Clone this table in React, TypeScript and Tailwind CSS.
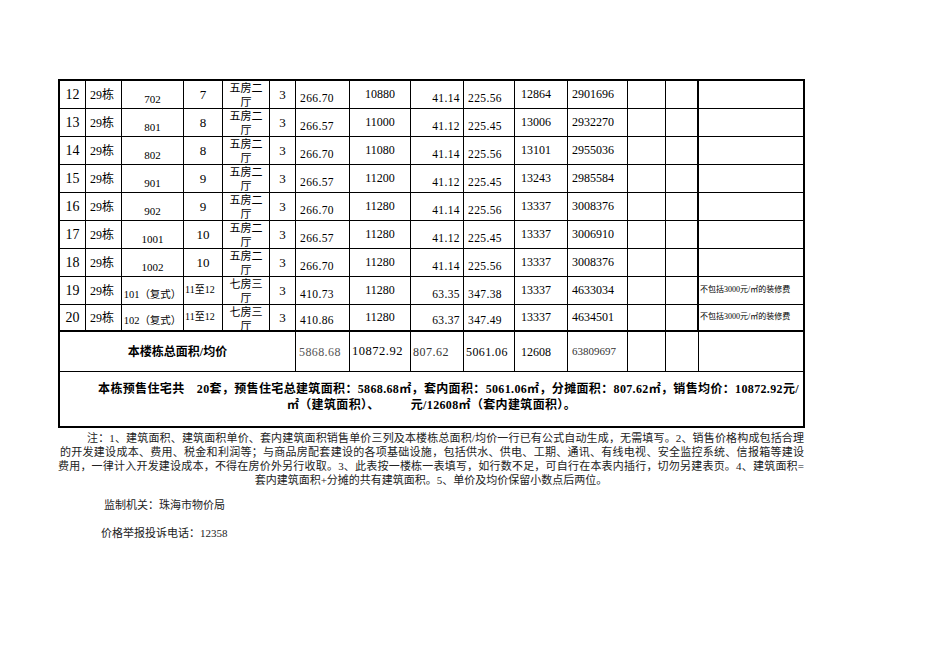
import React from "react";

type Row = {
  n: string;
  room: string;
  floor: string;
  type: string;
  area: string;
  price: string;
  share: string;
  inner: string;
  innerPrice: string;
  total: string;
  note?: string;
  dup?: boolean;
};

const rows: Row[] = [
  { n: "12", room: "702", floor: "7", type: "五房二厅", area: "266.70", price: "10880", share: "41.14", inner: "225.56", innerPrice: "12864", total: "2901696" },
  { n: "13", room: "801", floor: "8", type: "五房二厅", area: "266.57", price: "11000", share: "41.12", inner: "225.45", innerPrice: "13006", total: "2932270" },
  { n: "14", room: "802", floor: "8", type: "五房二厅", area: "266.70", price: "11080", share: "41.14", inner: "225.56", innerPrice: "13101", total: "2955036" },
  { n: "15", room: "901", floor: "9", type: "五房二厅", area: "266.57", price: "11200", share: "41.12", inner: "225.45", innerPrice: "13243", total: "2985584" },
  { n: "16", room: "902", floor: "9", type: "五房二厅", area: "266.70", price: "11280", share: "41.14", inner: "225.56", innerPrice: "13337", total: "3008376" },
  { n: "17", room: "1001", floor: "10", type: "五房二厅", area: "266.57", price: "11280", share: "41.12", inner: "225.45", innerPrice: "13337", total: "3006910" },
  { n: "18", room: "1002", floor: "10", type: "五房二厅", area: "266.70", price: "11280", share: "41.14", inner: "225.56", innerPrice: "13337", total: "3008376" },
  { n: "19", room: "101（复式）", floor: "11至12", type: "七房三厅", area: "410.73", price: "11280", share: "63.35", inner: "347.38", innerPrice: "13337", total: "4633034", note: "不包括3000元/㎡的装修费", dup: true },
  { n: "20", room: "102（复式）", floor: "11至12", type: "七房三厅", area: "410.86", price: "11280", share: "63.37", inner: "347.49", innerPrice: "13337", total: "4634501", note: "不包括3000元/㎡的装修费", dup: true },
];

function DataRow({ r, last }: { r: Row; last: boolean }) {
  const b = last ? "border-b-2" : "border-b";
  const base = `border-r border-black overflow-hidden ${b}`;
  return (
    <>
      <div className={`${base} flex items-center justify-center text-[14px]`}>{r.n}</div>
      <div className={`${base} flex items-center pl-[4px] text-[12px]`}>29栋</div>
      <div className={`${base} flex items-end justify-center pb-[1px] whitespace-nowrap ${r.dup ? "text-[10.5px]" : "text-[11px]"}`}>{r.room}</div>
      {r.dup ? (
        <div className={`${base} flex items-center pl-[1px] pb-[3px] text-[10px] whitespace-nowrap`}>{r.floor}</div>
      ) : (
        <div className={`${base} flex items-center justify-center text-[13px]`}>{r.floor}</div>
      )}
      <div className={`${base} text-center text-[11px] leading-[14px] px-[2px]`}>{r.type}</div>
      <div className={`${base} flex items-center justify-center text-[13px]`}>3</div>
      <div className={`${base} flex items-end pl-[4px] pb-[1px] text-[11.5px] tracking-[0.4px]`}>{r.area}</div>
      <div className={`${base} flex items-center justify-center pb-[2px] text-[12px]`}>{r.price}</div>
      <div className={`${base} flex items-end justify-end pr-[3px] pb-[1px] text-[11.5px] tracking-[0.4px]`}>{r.share}</div>
      <div className={`${base} flex items-end pl-[4px] pb-[1px] text-[11.5px] tracking-[0.4px]`}>{r.inner}</div>
      <div className={`${base} flex items-center pl-[6px] pb-[2px] text-[12px]`}>{r.innerPrice}</div>
      <div className={`${base} flex items-center pl-[4px] pb-[2px] text-[12px]`}>{r.total}</div>
      <div className={base}></div>
      <div className={`border-r-2 border-black ${b}`}></div>
      <div className={`border-r-2 border-black overflow-hidden ${b} flex items-center pl-[1px] pb-[2px] text-[8px] whitespace-nowrap`}>
        {r.note ?? ""}
      </div>
    </>
  );
}

export default function App() {
  return (
    <div className="w-[936px] h-[662px] bg-white overflow-hidden pt-[79px] pl-[58px] text-black font-['Liberation_Serif','Noto_Sans_CJK_SC',serif]">
      <div className="grid w-[747px] border-l-2 border-t-2 border-black grid-cols-[26px_36px_62px_39px_47px_26px_54px_61px_53px_51px_53px_60px_38px_33px_106px] grid-rows-[28px_28px_28px_28px_28px_28px_28px_28px_27px_40px_56px]">
        {rows.map((r, i) => (
          <DataRow key={r.n} r={r} last={i === rows.length - 1} />
        ))}

        {/* summary row */}
        <div className="col-span-6 border-r border-b border-black flex items-center justify-center font-bold text-[12px]">
          本楼栋总面积/均价
        </div>
        <div className="border-r border-b border-black flex items-center pl-[3px] text-[12px] text-[#555] tracking-[0.4px]">5868.68</div>
        <div className="border-r border-b border-black flex items-center pl-[2px] text-[12.5px] tracking-[0.5px]">10872.92</div>
        <div className="border-r border-b border-black flex items-center pl-[2px] text-[12px] text-[#333] tracking-[0.5px]">807.62</div>
        <div className="border-r border-b border-black flex items-center pl-[2px] text-[12px] tracking-[0.4px]">5061.06</div>
        <div className="border-r border-b border-black flex items-center pl-[6px] text-[12px]">12608</div>
        <div className="border-r border-b border-black flex items-center pl-[4px] text-[11px] text-[#333]">63809697</div>
        <div className="border-r border-b border-black"></div>
        <div className="border-r border-b border-black"></div>
        <div className="border-r-2 border-b border-black"></div>

        {/* presale summary */}
        <div className="col-span-15 border-r-2 border-b-2 border-black flex flex-col items-center justify-center pb-[4px] font-bold text-[12px] leading-[16px] whitespace-nowrap tracking-[0.35px]">
          <div className="pl-[34px]">本栋预售住宅共　20套，预售住宅总建筑面积：5868.68㎡，套内面积：5061.06㎡，分摊面积：807.62㎡，销售均价：10872.92元/</div>
          <div>㎡（建筑面积）、　　　元/12608㎡（套内建筑面积）。</div>
        </div>
      </div>

      <div className="w-[746px] mt-[3px] text-[11px] leading-[14px] text-[#222]">
        <div className="pl-[29px] text-justify [text-align-last:justify]">
          注：1、建筑面积、建筑面积单价、套内建筑面积销售单价三列及本楼栋总面积/均价一行已有公式自动生成，无需填写。2、销售价格构成包括合理
        </div>
        <div className="pl-[2px] text-justify [text-align-last:justify]">
          的开发建设成本、费用、税金和利润等；与商品房配套建设的各项基础设施，包括供水、供电、工期、通讯、有线电视、安全监控系统、信报箱等建设
        </div>
        <div className="text-justify [text-align-last:justify]">
          费用，一律计入开发建设成本，不得在房价外另行收取。3、此表按一楼栋一表填写，如行数不足，可自行在本表内插行，切勿另建表页。4、建筑面积=
        </div>
        <div className="text-center">套内建筑面积+分摊的共有建筑面积。5、单价及均价保留小数点后两位。</div>
      </div>

      <div className="mt-[11px] pl-[46px] text-[11px] leading-[14px] text-[#222]">监制机关：珠海市物价局</div>
      <div className="mt-[14px] pl-[43px] text-[11px] leading-[14px] text-[#222]">价格举报投诉电话：12358</div>
    </div>
  );
}
